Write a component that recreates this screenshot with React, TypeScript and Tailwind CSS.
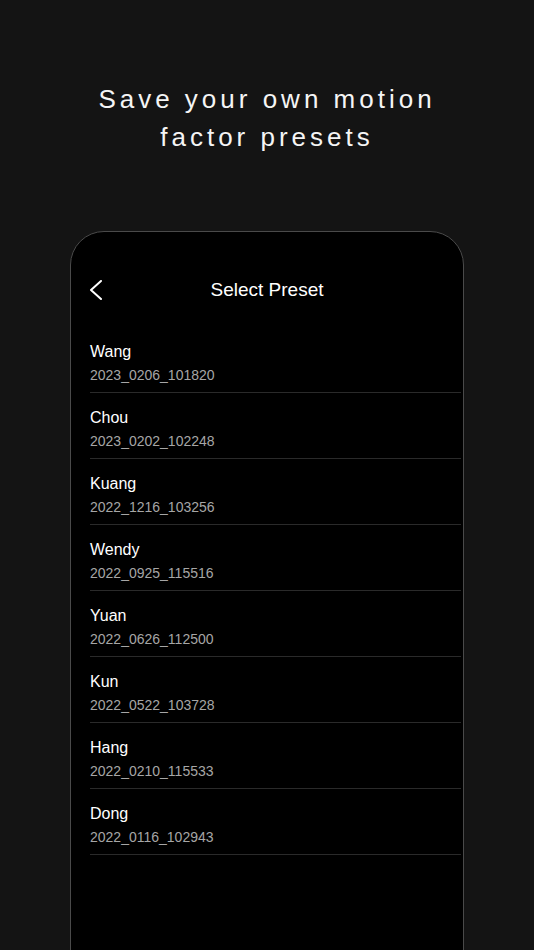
const presets = [
  { name: "Wang", date: "2023_0206_101820" },
  { name: "Chou", date: "2023_0202_102248" },
  { name: "Kuang", date: "2022_1216_103256" },
  { name: "Wendy", date: "2022_0925_115516" },
  { name: "Yuan", date: "2022_0626_112500" },
  { name: "Kun", date: "2022_0522_103728" },
  { name: "Hang", date: "2022_0210_115533" },
  { name: "Dong", date: "2022_0116_102943" },
];

export default function App() {
  return (
    <div
      className="h-[950px] w-full overflow-hidden bg-[#141414] text-white"
      style={{ fontFamily: '"Liberation Sans", Arial, sans-serif' }}
    >
      {/* Headline */}
      <h1 className="pt-[80px] text-center text-[26px] font-medium leading-[38px] tracking-[4px] text-[#f5f5f5]">
        Save your own motion
        <br />
        factor presets
      </h1>

      {/* Phone frame */}
      <div className="mx-auto mt-[75px] h-[760px] w-[394px] rounded-[34px] border-[1.5px] border-[#4a4a4a] bg-black pt-[40px]">
        <div className="relative mb-[19px] flex h-[36px] items-center justify-center">
          <svg
            className="absolute left-[18px] top-[8px]"
            width="14"
            height="20"
            viewBox="0 0 14 20"
            fill="none"
          >
            <polyline
              points="12,1 2,10 12,19"
              stroke="white"
              strokeWidth="2"
              strokeLinecap="round"
              strokeLinejoin="round"
            />
          </svg>
          <span className="text-[19px] font-medium">Select Preset</span>
        </div>

        <ul className="pl-[19px] pr-[2px]">
          {presets.map((p) => (
            <li
              key={p.name}
              className="flex flex-col border-b border-[#2a2a2a] pb-[7px] pt-[15px]"
            >
              <span className="text-[16px] leading-5 text-white">{p.name}</span>
              <span className="mt-[3px] text-[14px] leading-5 text-[#a6a6a6]">
                {p.date}
              </span>
            </li>
          ))}
        </ul>
      </div>
    </div>
  );
}
